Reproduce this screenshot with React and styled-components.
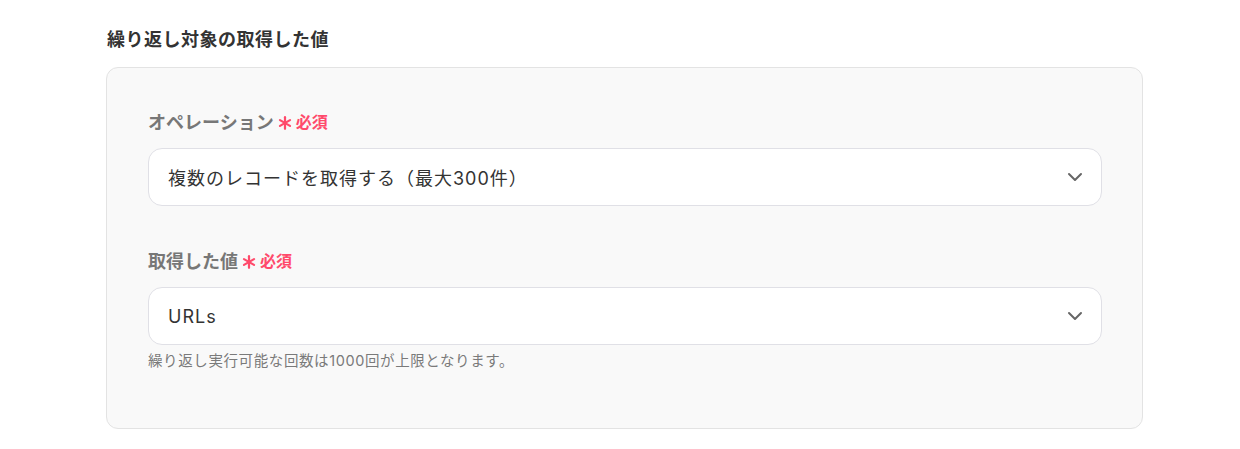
import React from 'react'
import styled, { createGlobalStyle } from 'styled-components'

const GlobalStyle = createGlobalStyle`
  body {
    margin: 0;
    background: #ffffff;
    font-family: Inter, "Noto Sans CJK JP", sans-serif;
  }
`

const Page = styled.div`
  padding: 28px 97px 20px 106px;
`

const Heading = styled.h2`
  margin: 0 0 15px 1px;
  font-size: 18px;
  line-height: 24px;
  font-weight: 600;
  letter-spacing: 0.5px;
  color: #333333;
`

const Card = styled.div`
  background: #f9f9f9;
  border: 1px solid #e3e3e3;
  border-radius: 12px;
  padding: 40px 40px 57px 41px;
  display: flex;
  flex-direction: column;
`

const Field = styled.div`
  display: flex;
  flex-direction: column;
  margin-top: ${(p) => (p.$first ? '0' : '41px')};
`

const Label = styled.div`
  display: flex;
  align-items: center;
  height: 26px;
  font-size: 18px;
  font-weight: 700;
  color: #777777;
`

const Required = styled.span`
  display: inline-flex;
  align-items: center;
  margin-left: 4px;
  color: #ff4a6b;
  font-size: 16px;
  font-weight: 700;

  svg {
    margin-right: 4px;
    margin-top: 3px;
  }
`

const Select = styled.div`
  margin-top: 14px;
  height: 58px;
  box-sizing: border-box;
  background: #ffffff;
  border: 1px solid #e0e0e6;
  border-radius: 14px;
  display: flex;
  align-items: center;
  justify-content: space-between;
  padding: 0 18px 0 19px;
  font-size: 18px;
  letter-spacing: 1px;
  color: #333333;
`

const Help = styled.div`
  margin-top: 6px;
  font-size: 14.5px;
  line-height: 20px;
  letter-spacing: 0.6px;
  color: #7a7a7a;
`

const Asterisk = () => (
  <svg width="14" height="14" viewBox="0 0 12 12">
    <g stroke="#ff4a6b" strokeWidth="1.9" strokeLinecap="round">
      <line x1="6" y1="1" x2="6" y2="11" />
      <line x1="1.7" y1="3.5" x2="10.3" y2="8.5" />
      <line x1="1.7" y1="8.5" x2="10.3" y2="3.5" />
    </g>
  </svg>
)

const Chevron = () => (
  <svg width="16" height="10" viewBox="0 0 16 10">
    <path d="M2 2 L8 8 L14 2" fill="none" stroke="#666666" strokeWidth="2" strokeLinecap="round" strokeLinejoin="round" />
  </svg>
)

const fields = [
  { label: 'オペレーション', value: '複数のレコードを取得する（最大300件）' },
  { label: '取得した値', value: 'URLs', help: '繰り返し実行可能な回数は1000回が上限となります。' },
]

export default function App() {
  return (
    <>
      <GlobalStyle />
      <Page>
        <Heading>繰り返し対象の取得した値</Heading>
        <Card>
          {fields.map((f, i) => (
            <Field key={f.label} $first={i === 0}>
              <Label>
                {f.label}
                <Required>
                  <Asterisk />
                  必須
                </Required>
              </Label>
              <Select>
                <span>{f.value}</span>
                <Chevron />
              </Select>
              {f.help && <Help>{f.help}</Help>}
            </Field>
          ))}
        </Card>
      </Page>
    </>
  )
}
